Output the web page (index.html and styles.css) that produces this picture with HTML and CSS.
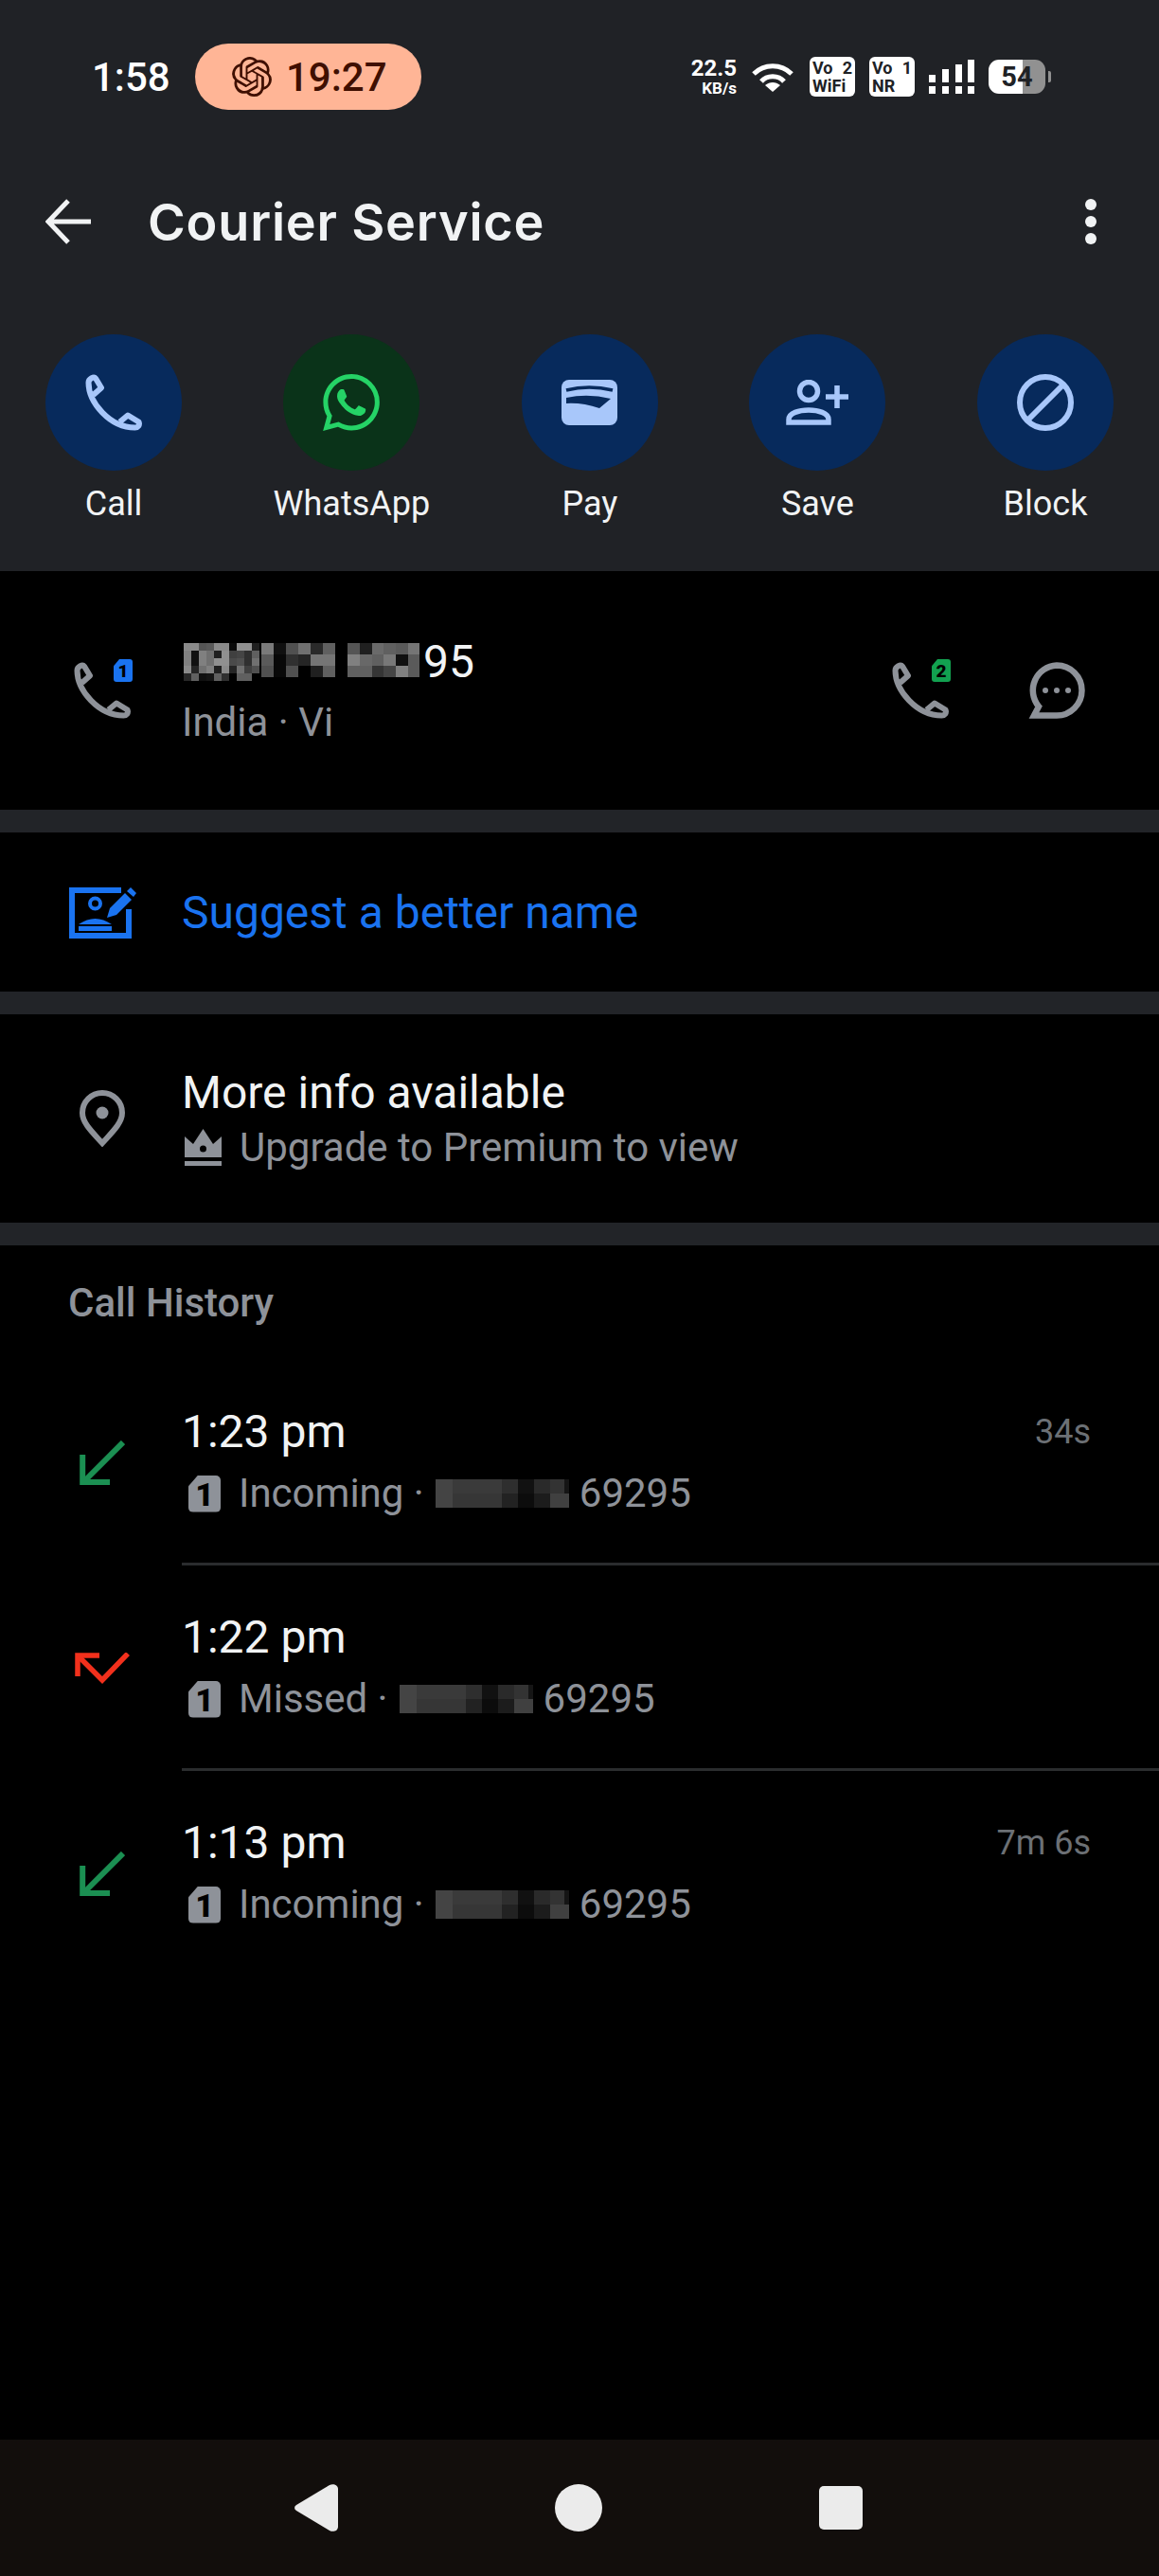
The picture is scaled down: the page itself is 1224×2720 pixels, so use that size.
FILE: index.html
```html
<!DOCTYPE html>
<html lang="en">
<head>
    <meta charset="UTF-8">
    <title>Courier Service</title>
    <link rel="stylesheet" href="styles.css">
</head>
<body>
    <svg class="defs" width="0" height="0">
        <symbol id="i-phone" viewBox="0 0 60 60">
            <path fill="none" stroke="currentColor" stroke-width="6" stroke-linejoin="round" d="M36.5 50.5L45 43.5L56.5 50.5C58 54 55.5 56.5 52.5 56.5C26 56.5 3.5 30 3.5 9C3.5 5 9 2 11 4.5L17 14.5L8.5 22"/>
        </symbol>
        <symbol id="i-in" viewBox="0 0 48 47">
            <path fill="none" stroke="currentColor" stroke-width="6" d="M46 2L5 43"/>
            <path fill="none" stroke="currentColor" stroke-width="6" d="M3.2 15V44H32"/>
        </symbol>
        <symbol id="i-missed" viewBox="0 0 58 33">
            <path fill="none" stroke="currentColor" stroke-width="5.5" d="M26 3H3V25"/>
            <path fill="none" stroke="currentColor" stroke-width="5.5" d="M3 3L29 29L56 1"/>
        </symbol>
        <symbol id="i-mask" viewBox="0 0 141 30" preserveAspectRatio="none">
            <g shape-rendering="crispEdges">
                <rect x="0" y="0" width="18" height="15" fill="#444"/><rect x="18" y="0" width="52" height="15" fill="#3a3a3a"/><rect x="70" y="0" width="17" height="15" fill="#2e2e2e"/><rect x="87" y="0" width="17" height="15" fill="#111"/><rect x="104" y="0" width="17" height="15" fill="#2a2a2a"/><rect x="121" y="0" width="15" height="15" fill="#333"/><rect x="136" y="0" width="5" height="15" fill="#151515"/>
                <rect x="0" y="15" width="18" height="15" fill="#444"/><rect x="18" y="15" width="52" height="15" fill="#363636"/><rect x="70" y="15" width="17" height="15" fill="#222"/><rect x="87" y="15" width="17" height="15" fill="#0c0c0c"/><rect x="104" y="15" width="17" height="15" fill="#1c1c1c"/><rect x="121" y="15" width="20" height="15" fill="#404040"/>
            </g>
        </symbol>
    </svg>

    <div class="header">
        <div class="status-bar">
            <span class="clock">1:58</span>
            <div class="timer-pill">
                <svg class="openai" viewBox="0 0 24 24"><path fill="currentColor" d="M22.2819 9.8211a5.9847 5.9847 0 0 0-.5157-4.9108 6.0462 6.0462 0 0 0-6.5098-2.9A6.0651 6.0651 0 0 0 4.9807 4.1818a5.9847 5.9847 0 0 0-3.9977 2.9 6.0462 6.0462 0 0 0 .7427 7.0966 5.98 5.98 0 0 0 .511 4.9107 6.051 6.051 0 0 0 6.5146 2.9001A5.9847 5.9847 0 0 0 13.2599 24a6.0557 6.0557 0 0 0 5.7718-4.2058 5.9894 5.9894 0 0 0 3.9977-2.9001 6.0557 6.0557 0 0 0-.7475-7.0729zm-9.022 12.6081a4.4755 4.4755 0 0 1-2.8764-1.0408l.1419-.0804 4.7783-2.7582a.7948.7948 0 0 0 .3927-.6813v-6.7369l2.02 1.1686a.071.071 0 0 1 .038.052v5.5826a4.504 4.504 0 0 1-4.4945 4.4944zm-9.6607-4.1254a4.4708 4.4708 0 0 1-.5346-3.0137l.142.0852 4.783 2.7582a.7712.7712 0 0 0 .7806 0l5.8428-3.3685v2.3324a.0804.0804 0 0 1-.0332.0615L9.74 19.9502a4.4992 4.4992 0 0 1-6.1408-1.6464zM2.3408 7.8956a4.485 4.485 0 0 1 2.3655-1.9728V11.6a.7664.7664 0 0 0 .3879.6765l5.8144 3.3543-2.0201 1.1685a.0757.0757 0 0 1-.071 0l-4.8303-2.7865A4.504 4.504 0 0 1 2.3408 7.872zm16.5963 3.8558L13.1038 8.364 15.1192 7.2a.0757.0757 0 0 1 .071 0l4.8303 2.7913a4.4944 4.4944 0 0 1-.6765 8.1042v-5.6772a.79.79 0 0 0-.407-.667zm2.0107-3.0231l-.142-.0852-4.7735-2.7818a.7759.7759 0 0 0-.7854 0L9.409 9.2297V6.8974a.0662.0662 0 0 1 .0284-.0615l4.8303-2.7866a4.4992 4.4992 0 0 1 6.6802 4.66zM8.3065 12.863l-2.02-1.1638a.0804.0804 0 0 1-.038-.0567V6.0742a4.4992 4.4992 0 0 1 7.3757-3.4537l-.142.0805L8.704 5.459a.7948.7948 0 0 0-.3927.6813zm1.0976-2.3654l2.602-1.4998 2.6069 1.4998v2.9994l-2.5974 1.4997-2.6067-1.4997Z"/></svg>
                <span>19:27</span>
            </div>
            <div class="status-icons">
                <div class="net-speed"><span class="net-value">22.5</span><span class="net-unit">KB/s</span></div>
                <svg class="wifi" viewBox="0 0 44 32">
                    <path fill="none" stroke="currentColor" stroke-width="5" d="M2 13C13 2 31 2 42 13"/>
                    <path fill="none" stroke="currentColor" stroke-width="5" d="M10 21C16 14 28 14 34 21"/>
                    <path fill="currentColor" d="M22 32L14 25C19 21 25 21 30 25Z"/>
                </svg>
                <div class="vo-box"><div class="vo-top"><span>Vo</span><span>2</span></div><span>WiFi</span></div>
                <div class="vo-box"><div class="vo-top"><span>Vo</span><span>1</span></div><span>NR</span></div>
                <svg class="signal" viewBox="0 0 48 36" shape-rendering="crispEdges">
                    <rect x="0" y="16" width="7" height="8" fill="currentColor"/><rect x="0" y="28" width="7" height="8" fill="currentColor"/>
                    <rect x="14" y="10" width="7" height="14" fill="currentColor"/><rect x="14" y="28" width="7" height="8" fill="currentColor"/>
                    <rect x="28" y="5" width="7" height="19" fill="currentColor"/><rect x="28" y="28" width="7" height="8" fill="currentColor"/>
                    <rect x="41" y="0" width="7" height="24" fill="currentColor"/><rect x="41" y="28" width="7" height="8" fill="currentColor"/>
                </svg>
                <div class="battery">54</div>
            </div>
        </div>

        <div class="toolbar">
            <svg class="back" viewBox="0 0 48 48"><path fill="none" stroke="currentColor" stroke-width="5" d="M48 24H4M24 2L3 24L24 46"/></svg>
            <h1 class="title">Courier Service</h1>
            <div class="more"><i></i><i></i><i></i></div>
        </div>

        <div class="actions">
            <div class="action">
                <div class="action-circle"><svg class="ic60"><use href="#i-phone"/></svg></div>
                <span>Call</span>
            </div>
            <div class="action">
                <div class="action-circle green"><svg class="ic60" viewBox="0 0 24 24"><path fill="currentColor" d="M17.472 14.382c-.297-.149-1.758-.867-2.03-.967-.273-.099-.471-.148-.67.15-.197.297-.767.966-.94 1.164-.173.199-.347.223-.644.075-.297-.15-1.255-.463-2.39-1.475-.883-.788-1.48-1.761-1.653-2.059-.173-.297-.018-.458.13-.606.134-.133.298-.347.446-.52.149-.174.198-.298.298-.497.099-.198.05-.371-.025-.52-.075-.149-.669-1.612-.916-2.207-.242-.579-.487-.5-.669-.51-.173-.008-.371-.01-.57-.01-.198 0-.52.074-.792.372-.272.297-1.04 1.016-1.04 2.479 0 1.462 1.065 2.875 1.213 3.074.149.198 2.096 3.2 5.077 4.487.709.306 1.262.489 1.694.625.712.227 1.36.195 1.871.118.571-.085 1.758-.719 2.006-1.413.248-.694.248-1.289.173-1.413-.074-.124-.272-.198-.57-.347m-5.421 7.403h-.004a9.87 9.87 0 01-5.031-1.378l-.361-.214-3.741.982.998-3.648-.235-.374a9.86 9.86 0 01-1.51-5.26c.001-5.45 4.436-9.884 9.888-9.884 2.64 0 5.122 1.03 6.988 2.898a9.825 9.825 0 012.893 6.994c-.003 5.45-4.437 9.884-9.885 9.884m8.413-18.297A11.815 11.815 0 0012.05 0C5.495 0 .16 5.335.157 11.892c0 2.096.547 4.142 1.588 5.945L.057 24l6.305-1.654a11.882 11.882 0 005.683 1.448h.005c6.554 0 11.89-5.335 11.893-11.893a11.821 11.821 0 00-3.48-8.413Z"/></svg></div>
                <span>WhatsApp</span>
            </div>
            <div class="action">
                <div class="action-circle">
                    <svg class="ic-pay" viewBox="0 0 59 48">
                        <rect width="59" height="48" rx="8" fill="currentColor"/>
                        <path fill="none" stroke="#072a5c" stroke-width="3.5" d="M5 11Q29 5 54 11"/>
                        <path fill="#072a5c" d="M5 19Q28 14 52 20L40 30Q22 24 5 25Z"/>
                    </svg>
                </div>
                <span>Pay</span>
            </div>
            <div class="action">
                <div class="action-circle">
                    <svg class="ic-save" viewBox="0 0 66 48">
                        <circle cx="24" cy="12" r="9.5" fill="none" stroke="currentColor" stroke-width="5.5"/>
                        <path fill="none" stroke="currentColor" stroke-width="5.5" d="M3 45V42C3 35 14 32 24 32C34 32 45 35 45 42V45Z"/>
                        <path fill="none" stroke="currentColor" stroke-width="5.5" d="M54 6V30M42 18H66"/>
                    </svg>
                </div>
                <span>Save</span>
            </div>
            <div class="action">
                <div class="action-circle">
                    <svg class="ic60" viewBox="0 0 60 60">
                        <circle cx="30" cy="30" r="27" fill="none" stroke="currentColor" stroke-width="6"/>
                        <path fill="none" stroke="currentColor" stroke-width="6" d="M50 10L10 50"/>
                    </svg>
                </div>
                <span>Block</span>
            </div>
        </div>
    </div>

    <div class="content">
        <section class="row number-row">
            <div class="row-icon">
                <div class="phone-sim">
                    <svg class="ic60"><use href="#i-phone"/></svg>
                    <span class="sim-badge blue">1</span>
                </div>
            </div>
            <div class="row-text">
                <div class="number-line">
                    <svg class="mosaic" viewBox="0 0 250 40" shape-rendering="crispEdges">
                        <rect x="0" y="0" width="8" height="8" fill="#8a8a8a"/><rect x="8" y="0" width="8" height="8" fill="#8a8a8a"/><rect x="16" y="0" width="8" height="8" fill="#555"/><rect x="24" y="0" width="8" height="8" fill="#5a5a5a"/><rect x="32" y="0" width="8" height="8" fill="#8a8a8a"/><rect x="40" y="0" width="8" height="8" fill="#8a8a8a"/><rect x="48" y="0" width="8" height="8" fill="#0a0a0a"/><rect x="56" y="0" width="8" height="8" fill="#909090"/><rect x="64" y="0" width="8" height="8" fill="#909090"/><rect x="72" y="0" width="8" height="8" fill="#202020"/>
                        <rect x="0" y="8" width="8" height="8" fill="#808080"/><rect x="8" y="8" width="8" height="8" fill="#101010"/><rect x="16" y="8" width="8" height="8" fill="#808080"/><rect x="24" y="8" width="8" height="8" fill="#707070"/><rect x="32" y="8" width="8" height="8" fill="#202020"/><rect x="40" y="8" width="8" height="8" fill="#909090"/><rect x="48" y="8" width="8" height="8" fill="#404040"/><rect x="56" y="8" width="8" height="8" fill="#454545"/><rect x="64" y="8" width="8" height="8" fill="#303030"/><rect x="72" y="8" width="8" height="8" fill="#606060"/>
                        <rect x="0" y="16" width="8" height="8" fill="#808080"/><rect x="8" y="16" width="8" height="8" fill="#101010"/><rect x="16" y="16" width="8" height="8" fill="#808080"/><rect x="24" y="16" width="8" height="8" fill="#707070"/><rect x="32" y="16" width="8" height="8" fill="#909090"/><rect x="40" y="16" width="8" height="8" fill="#909090"/><rect x="48" y="16" width="8" height="8" fill="#4a4a4a"/><rect x="56" y="16" width="8" height="8" fill="#505050"/><rect x="64" y="16" width="8" height="8" fill="#303030"/><rect x="72" y="16" width="8" height="8" fill="#707070"/>
                        <rect x="0" y="24" width="8" height="8" fill="#8a8a8a"/><rect x="8" y="24" width="8" height="8" fill="#252525"/><rect x="16" y="24" width="8" height="8" fill="#707070"/><rect x="24" y="24" width="8" height="8" fill="#808080"/><rect x="32" y="24" width="8" height="8" fill="#202020"/><rect x="40" y="24" width="8" height="8" fill="#8a8a8a"/><rect x="48" y="24" width="8" height="8" fill="#252525"/><rect x="56" y="24" width="8" height="8" fill="#707070"/><rect x="64" y="24" width="8" height="8" fill="#404040"/><rect x="72" y="24" width="8" height="8" fill="#505050"/>
                        <rect x="0" y="32" width="8" height="8" fill="#282828"/><rect x="8" y="32" width="8" height="8" fill="#606060"/><rect x="16" y="32" width="8" height="8" fill="#101010"/><rect x="24" y="32" width="8" height="8" fill="#151515"/><rect x="32" y="32" width="8" height="8" fill="#606060"/><rect x="40" y="32" width="8" height="8" fill="#303030"/><rect x="56" y="32" width="8" height="8" fill="#606060"/><rect x="64" y="32" width="8" height="8" fill="#606060"/>
                        <rect x="82" y="0" width="13" height="12" fill="#7a7a7a"/><rect x="95" y="0" width="13" height="12" fill="#101010"/><rect x="108" y="0" width="13" height="12" fill="#505050"/><rect x="121" y="0" width="13" height="12" fill="#707070"/><rect x="134" y="0" width="13" height="12" fill="#2a2a2a"/><rect x="147" y="0" width="13" height="12" fill="#606060"/>
                        <rect x="82" y="12" width="13" height="12" fill="#5a5a5a"/><rect x="95" y="12" width="13" height="12" fill="#080808"/><rect x="108" y="12" width="13" height="12" fill="#303030"/><rect x="121" y="12" width="13" height="12" fill="#252525"/><rect x="134" y="12" width="13" height="12" fill="#757575"/><rect x="147" y="12" width="13" height="12" fill="#757575"/>
                        <rect x="82" y="24" width="13" height="12" fill="#505050"/><rect x="95" y="24" width="13" height="12" fill="#080808"/><rect x="108" y="24" width="13" height="12" fill="#505050"/><rect x="134" y="24" width="13" height="12" fill="#202020"/><rect x="147" y="24" width="13" height="12" fill="#606060"/>
                        <rect x="173" y="0" width="13" height="12" fill="#555"/><rect x="186" y="0" width="13" height="12" fill="#202020"/><rect x="199" y="0" width="12" height="12" fill="#6a6a6a"/><rect x="211" y="0" width="13" height="12" fill="#606060"/><rect x="224" y="0" width="13" height="12" fill="#5a5a5a"/><rect x="237" y="0" width="12" height="12" fill="#757575"/>
                        <rect x="173" y="12" width="13" height="12" fill="#808080"/><rect x="186" y="12" width="13" height="12" fill="#686868"/><rect x="199" y="12" width="12" height="12" fill="#606060"/><rect x="211" y="12" width="13" height="12" fill="#787878"/><rect x="224" y="12" width="13" height="12" fill="#101010"/><rect x="237" y="12" width="12" height="12" fill="#5a5a5a"/>
                        <rect x="173" y="24" width="13" height="12" fill="#606060"/><rect x="186" y="24" width="13" height="12" fill="#606060"/><rect x="199" y="24" width="12" height="12" fill="#353535"/><rect x="211" y="24" width="13" height="12" fill="#454545"/><rect x="224" y="24" width="13" height="12" fill="#808080"/><rect x="237" y="24" width="12" height="12" fill="#5a5a5a"/>
                    </svg>
                    <span class="primary">95</span>
                </div>
                <div class="secondary">India · Vi</div>
            </div>
            <div class="number-actions">
                <div class="phone-sim">
                    <svg class="ic60"><use href="#i-phone"/></svg>
                    <span class="sim-badge green">2</span>
                </div>
                <svg class="ic60" viewBox="0 0 60 60">
                    <path fill="none" stroke="currentColor" stroke-width="6.5" d="M30 3.5a26.5 26.5 0 1 1 0 53H6l5-9.500A26.500 26.500 0 0 1 30 3.500Z"/>
                    <circle cx="18" cy="30" r="3" fill="currentColor"/><circle cx="30" cy="30" r="3" fill="currentColor"/><circle cx="42" cy="30" r="3" fill="currentColor"/>
                </svg>
            </div>
        </section>

        <section class="row suggest-row">
            <div class="row-icon">
                <svg class="ic-suggest" viewBox="0 0 71 55">
                    <path fill="none" stroke="currentColor" stroke-width="6" d="M55 4H3V52H63V24"/>
                    <circle cx="27.5" cy="18" r="5.5" fill="none" stroke="currentColor" stroke-width="4"/>
                    <path fill="currentColor" d="M10 40Q27.5 28 45 40ZM10 42H45V47H10Z"/>
                    <path fill="currentColor" d="M40 33L43 23L59 7L66 14L50 30ZM61 5L65 1L71 7L68 11Z"/>
                </svg>
            </div>
            <div class="suggest-text">Suggest a better name</div>
        </section>

        <section class="row info-row">
            <div class="row-icon">
                <svg class="ic-pin" viewBox="0 0 48 60">
                    <path fill="none" stroke="currentColor" stroke-width="6" d="M24 56C14 45 3 35 3 24A21 21 0 0 1 45 24C45 35 34 45 24 56Z"/>
                    <circle cx="24" cy="24" r="6.5" fill="currentColor"/>
                </svg>
            </div>
            <div class="row-text">
                <div class="primary">More info available</div>
                <div class="secondary sub-line info-sub">
                    <svg class="ic-crown" viewBox="0 0 39 39">
                        <path fill="currentColor" fill-rule="evenodd" d="M0 8L9 16L19.5 0L30 16L39 8V30H0ZM19.5 17.5a3.5 3.5 0 1 0 0 7a3.5 3.5 0 1 0 0-7Z"/>
                        <rect y="34" width="39" height="5" fill="currentColor"/>
                    </svg>
                    <span>Upgrade to Premium to view</span>
                </div>
            </div>
        </section>

        <section class="history">
            <h2 class="history-title">Call History</h2>

            <div class="call-row">
                <div class="row-icon"><svg class="ic-in"><use href="#i-in"/></svg></div>
                <div class="call-body">
                    <div class="call-text">
                        <div class="primary">1:23 pm</div>
                        <div class="secondary sub-line">
                            <span class="sim">1</span>
                            <span>Incoming ·</span>
                            <svg class="mask"><use href="#i-mask"/></svg>
                            <span>69295</span>
                        </div>
                    </div>
                    <span class="duration">34s</span>
                </div>
            </div>

            <div class="call-row">
                <div class="row-icon"><svg class="ic-missed"><use href="#i-missed"/></svg></div>
                <div class="call-body">
                    <div class="call-text">
                        <div class="primary">1:22 pm</div>
                        <div class="secondary sub-line">
                            <span class="sim">1</span>
                            <span>Missed ·</span>
                            <svg class="mask"><use href="#i-mask"/></svg>
                            <span>69295</span>
                        </div>
                    </div>
                </div>
            </div>

            <div class="call-row last">
                <div class="row-icon"><svg class="ic-in"><use href="#i-in"/></svg></div>
                <div class="call-body">
                    <div class="call-text">
                        <div class="primary">1:13 pm</div>
                        <div class="secondary sub-line">
                            <span class="sim">1</span>
                            <span>Incoming ·</span>
                            <svg class="mask"><use href="#i-mask"/></svg>
                            <span>69295</span>
                        </div>
                    </div>
                    <span class="duration">7m 6s</span>
                </div>
            </div>
        </section>
    </div>

    <div class="nav-bar">
        <svg class="nav-back" viewBox="0 0 46 50"><path fill="currentColor" d="M37 1C40.500 -1 46 0.500 46 5V45C46 49.500 40.500 51 37 49L2 28C-0.500 26.500 -0.500 23.500 2 22Z"/></svg>
        <div class="nav-home"></div>
        <div class="nav-recent"></div>
    </div>
</body>
</html>
```

FILE: styles.css
```css
* {
    box-sizing: border-box;
}
body {
    margin: 0;
    width: 1224px;
    height: 2720px;
    display: flex;
    flex-direction: column;
    background-color: #000;
    color: #f1f3f4;
    font-family: 'Roboto', 'Liberation Sans', sans-serif;
}
.defs {
    position: absolute;
}

/* top dark area */
.header {
    height: 603px;
    padding-top: 46px;
    background-color: #202226;
}
.status-bar {
    display: flex;
    align-items: center;
    height: 70px;
    padding: 0 120px 0 97px;
}
.clock {
    width: 109px;
    font-size: 42px;
    font-weight: 500;
    color: #fff;
}
.timer-pill {
    display: flex;
    align-items: center;
    gap: 15px;
    width: 239px;
    height: 70px;
    padding-left: 39px;
    border-radius: 35px;
    background-color: #ffb596;
    color: #3f0f00;
    font-size: 42px;
    font-weight: 500;
}
.openai {
    width: 42px;
    height: 42px;
}
.status-icons {
    display: flex;
    align-items: center;
    margin-left: auto;
    color: #fff;
}
.net-speed {
    display: flex;
    flex-direction: column;
    align-items: flex-end;
    width: 49px;
    font-weight: 700;
}
.net-value {
    font-size: 24px;
    line-height: 24px;
    white-space: nowrap;
}
.net-unit {
    font-size: 17px;
    line-height: 18px;
    white-space: nowrap;
}
.wifi {
    width: 44px;
    height: 32px;
    margin: 0 17px 0 16px;
}
.vo-box {
    width: 48px;
    height: 42px;
    margin-right: 15px;
    padding: 2px 3px 0;
    border-radius: 6px;
    background-color: #fff;
    color: #202226;
    font-size: 18px;
    line-height: 19px;
    font-weight: 700;
}
.vo-top {
    display: flex;
    justify-content: space-between;
}
.signal {
    width: 48px;
    height: 36px;
}
.battery {
    width: 60px;
    height: 36px;
    margin-left: 15px;
    border-radius: 11px;
    background: linear-gradient(90deg, #fff 60%, #919191 60%);
    color: #202226;
    font-size: 29px;
    line-height: 36px;
    font-weight: 700;
    text-align: center;
    position: relative;
}
.battery::after {
    content: '';
    position: absolute;
    left: 63px;
    top: 12px;
    width: 3px;
    height: 12px;
    border-radius: 0 2px 2px 0;
    background-color: #919191;
}
.toolbar {
    display: flex;
    align-items: center;
    height: 80px;
    margin-top: 78px;
    padding: 0 66px 0 48px;
    color: #f1f3f4;
}
.back {
    width: 48px;
    height: 48px;
    margin-right: 60px;
}
.title {
    margin: 0;
    font-family: 'Inter', sans-serif;
    font-size: 54px;
    font-weight: 600;
    letter-spacing: 0.8px;
    color: #f1f3f4;
}
.more {
    display: flex;
    flex-direction: column;
    gap: 6px;
    margin-left: auto;
}
.more i {
    width: 12px;
    height: 12px;
    border-radius: 50%;
    background-color: #f1f3f4;
}
.actions {
    display: flex;
    justify-content: space-between;
    margin-top: 79px;
    padding: 0 48px;
}
.action {
    display: flex;
    flex-direction: column;
    align-items: center;
    gap: 14px;
    font-size: 36px;
    line-height: 42px;
}
.action-circle {
    display: flex;
    align-items: center;
    justify-content: center;
    width: 144px;
    height: 144px;
    border-radius: 50%;
    background-color: #072a5c;
    color: #a8c7fa;
}
.action-circle.green {
    background-color: #0a3319;
    color: #25d366;
}
.ic60 {
    width: 60px;
    height: 60px;
    display: block;
}
.ic-pay {
    width: 59px;
    height: 48px;
}
.ic-save {
    width: 66px;
    height: 48px;
}

/* rows on black */
.content {
    flex: 1;
    background-color: #000;
}
.row {
    display: flex;
    align-items: center;
    border-bottom: 24px solid #222428;
    color: #8e9299;
}
.number-row {
    height: 276px;
}
.suggest-row {
    height: 192px;
}
.info-row {
    height: 244px;
}
.row-icon {
    display: flex;
    align-items: center;
    justify-content: center;
    flex: none;
    width: 120px;
    margin: 0 24px 0 48px;
    color: #8e9299;
}
.row-text {
    flex: 1;
}
.primary {
    font-size: 48px;
    line-height: 56px;
    color: #f1f3f4;
}
.secondary {
    font-size: 42px;
    line-height: 50px;
    color: #8e9299;
}
.phone-sim {
    position: relative;
    width: 60px;
    height: 60px;
}
.sim-badge {
    position: absolute;
    top: -3px;
    right: -2px;
    width: 20px;
    height: 24px;
    border-radius: 3px;
    clip-path: polygon(30% 0, 100% 0, 100% 100%, 0 100%, 0 30%);
    color: #000;
    font-size: 19px;
    line-height: 25px;
    font-weight: 900;
    text-align: center;
}
.sim-badge.blue {
    background-color: #1a73f0;
}
.sim-badge.green {
    background-color: #12a150;
}
.number-row .row-text {
    padding-top: 7px;
}
.number-line {
    display: flex;
    align-items: center;
    height: 44px;
    padding-left: 2px;
}
.mosaic {
    width: 250px;
    height: 40px;
    margin-right: 3px;
}
.number-row .secondary {
    margin-top: 17px;
}
.number-actions {
    display: flex;
    align-items: center;
    gap: 84px;
    padding-right: 78px;
}
.ic-suggest {
    width: 71px;
    height: 55px;
    color: #1a73f0;
}
.suggest-text {
    font-size: 48px;
    color: #1a73f0;
}
.ic-pin {
    width: 48px;
    height: 60px;
}
.sub-line {
    display: flex;
    align-items: center;
    gap: 14px;
}
.info-sub {
    margin-top: 5px;
    gap: 19px;
}
.ic-crown {
    width: 39px;
    height: 39px;
    margin-left: 3px;
    color: #8e9299;
}

/* call history */
.history-title {
    margin: 0;
    padding: 38px 0 0 72px;
    font-size: 42px;
    line-height: 46px;
    font-weight: 500;
    color: #8e9299;
}
.call-row {
    display: flex;
    align-items: center;
    height: 217px;
}
.history-title + .call-row {
    margin-top: 37px;
}
.ic-in {
    width: 48px;
    height: 47px;
    color: #1b8f52;
}
.ic-missed {
    width: 58px;
    height: 33px;
    color: #f2301c;
}
.call-body {
    flex: 1;
    display: flex;
    justify-content: space-between;
    height: 100%;
    padding: 48px 72px 0 0;
    border-bottom: 3px solid #2a2c2e;
}
.call-row.last .call-body {
    border-bottom: none;
}
.call-text .sub-line {
    margin-top: 12px;
}
.sim {
    flex: none;
    width: 34px;
    height: 39px;
    margin: 0 5px 0 7px;
    border-radius: 5px;
    clip-path: polygon(30% 0, 100% 0, 100% 100%, 0 100%, 0 30%);
    background-color: #8e9299;
    color: #000;
    font-size: 34px;
    line-height: 40px;
    font-weight: 900;
    text-align: center;
}
.mask {
    width: 141px;
    height: 30px;
    margin: 0 -3px 0 -2px;
}
.duration {
    margin-top: 7px;
    font-size: 36px;
    line-height: 42px;
    color: #6c7075;
}

/* bottom nav */
.nav-bar {
    display: flex;
    align-items: center;
    justify-content: center;
    gap: 229px;
    flex: none;
    height: 144px;
    padding-right: 2px;
    background-color: #120e0c;
    color: #ebebeb;
}
.nav-back {
    width: 46px;
    height: 50px;
}
.nav-home {
    width: 50px;
    height: 50px;
    border-radius: 50%;
    background-color: #ebebeb;
}
.nav-recent {
    width: 46px;
    height: 46px;
    border-radius: 5px;
    background-color: #ebebeb;
}
```
